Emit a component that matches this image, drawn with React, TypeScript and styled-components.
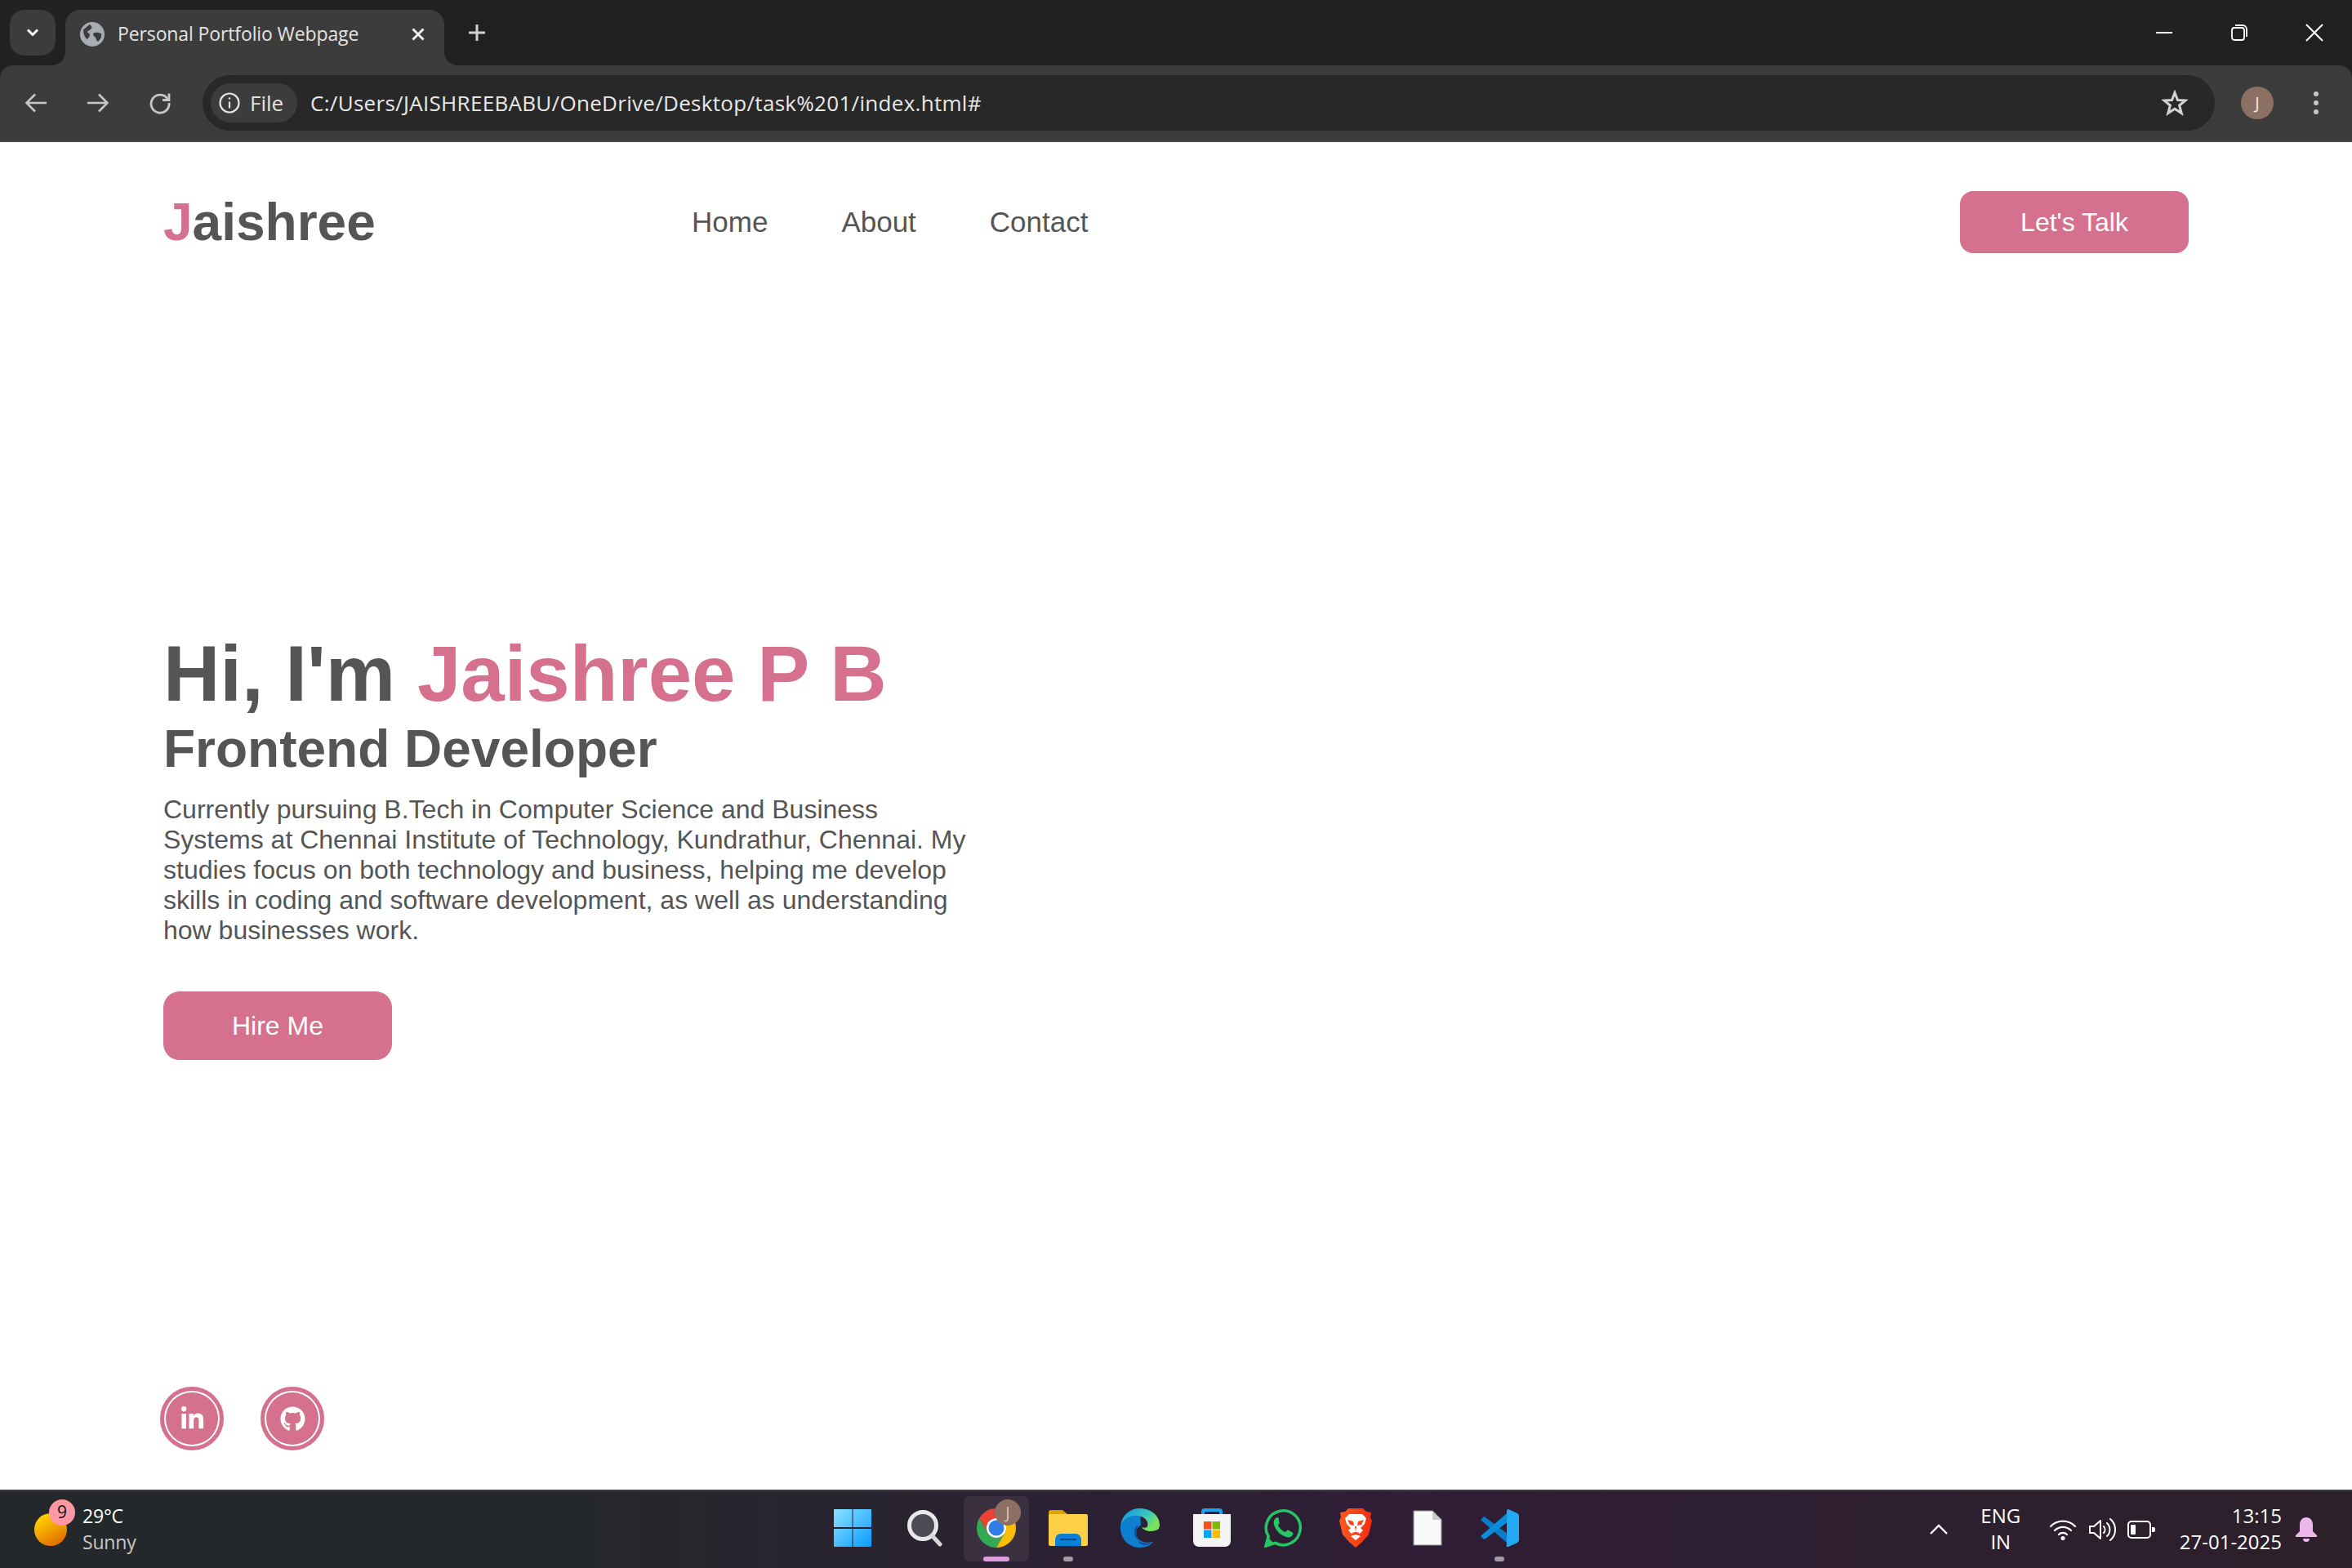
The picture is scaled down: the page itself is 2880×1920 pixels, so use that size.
import React from "react";
import styled, { createGlobalStyle } from "styled-components";
import { FaLinkedinIn, FaGithub } from "react-icons/fa";

const pink = "#d6708f";
const ui = '"Open Sans", "Noto Sans", sans-serif';

const Global = createGlobalStyle`
  html, body { margin: 0; padding: 0; background: #fff; }
  * { box-sizing: border-box; }
  #root { width: 2880px; height: 1920px; overflow: hidden; }
`;

const Screen = styled.div`
  width: 2880px; height: 1920px; display: flex; flex-direction: column;
  font-family: "Liberation Sans", Arial, sans-serif; overflow: hidden;
`;

/* ---------- browser chrome ---------- */
const TabStrip = styled.div`
  height: 80px; flex: none; background: #202221; display: flex; align-items: flex-end;
  padding-left: 12px; position: relative; color: #fff;
`;
const TabMenu = styled.div`
  width: 56px; height: 56px; margin-bottom: 12px; border-radius: 18px; background: #3c3c3c;
  display: flex; align-items: center; justify-content: center;
`;
const Tab = styled.div`
  width: 464px; height: 68px; margin-left: 12px; background: #3c3c3c; border-radius: 18px 18px 0 0;
  display: flex; align-items: center; padding: 0 0 8px 18px; position: relative;
  &::before, &::after {
    content: ""; position: absolute; bottom: 0; width: 16px; height: 16px;
    background: radial-gradient(circle at var(--cx) 0, #202221 15.5px, #3c3c3c 16px);
  }
  &::before { left: -16px; --cx: 0; }
  &::after { right: -16px; --cx: 16px; }
`;
const TabTitle = styled.span`
  font: 400 23px/30px ${ui}; color: #e3e3e3; margin: 0 0 2px 16px; flex: 1; white-space: nowrap;
  letter-spacing: -0.12px;
`;
const TabClose = styled.div`
  width: 20px; height: 20px; margin-right: 22px; display: flex;
`;
const NewTab = styled.div`
  margin: 0 0 28px 28px; width: 24px; height: 24px; display: flex;
`;
const WindowControls = styled.div`
  margin-left: auto; height: 80px; display: flex; align-items: flex-start; padding-top: 28px;
`;
const WinBtn = styled.div`
  width: 92px; height: 24px; display: flex; align-items: center; justify-content: center;
`;

const Toolbar = styled.div`
  height: 94px; flex: none; background: #3c3c3c; border-bottom: 2px solid #484848;
  display: flex; align-items: flex-start; padding-top: 12px; color: #c7c7c7;
  border-radius: 16px 16px 0 0; position: relative;
`;
const ToolbarFill = styled.div`
  background: #202221;
`;
const NavIcon = styled.div`
  width: 76px; height: 68px; display: flex; align-items: center; justify-content: center;
`;
const NavGroup = styled.div`
  width: 248px; padding-left: 6px; display: flex; flex: none;
`;
const Omnibox = styled.div`
  width: 2464px; height: 68px; flex: none; border-radius: 34px; background: #282828;
  display: flex; align-items: center; padding: 0 33px 0 10px;
`;
const SiteChip = styled.div`
  width: 106px; height: 48px; border-radius: 24px; background: #3c3c3c;
  display: flex; align-items: center; padding-left: 9px; gap: 11px;
  font: 400 26px/30px ${ui}; color: #e3e3e3;
`;
const Url = styled.span`
  font: 400 26px/30px ${ui}; color: #e8e8e8; margin-left: 16px; flex: 1; white-space: nowrap;
  letter-spacing: 0.3px;
`;
const Avatar = styled.div`
  width: 40px; height: 40px; border-radius: 50%; background: #8d7064; color: #f3ece8;
  display: flex; align-items: center; justify-content: center; font: 400 20px/1 ${ui};
`;
const ToolbarEnd = styled.div`
  display: flex; align-items: center; height: 68px; padding-left: 32px;
`;
const MenuDots = styled.div`
  margin-left: 49px; width: 8px; display: flex; flex-direction: column; gap: 5px;
  & > i { width: 6px; height: 6px; border-radius: 50%; background: #c7c7c7; display: block; }
`;

/* ---------- page ---------- */
const Page = styled.main`
  flex: 1; min-height: 0; background: #fff; padding: 60px 200px 0; color: #555;
`;
const Header = styled.header`
  height: 76px; display: flex; align-items: center;
`;
const Logo = styled.div`
  width: 647px; font-size: 64px; font-weight: 700; line-height: 76px; color: #555;
`;
const Accent = styled.span`
  color: ${pink};
`;
const NavLinks = styled.nav`
  display: flex; gap: 90px; flex: 1;
`;
const NavLink = styled.a`
  font-size: 35px; line-height: 40px; color: #555; text-decoration: none;
`;
const PinkButton = styled.button<{ $h: number; $r: number }>`
  width: 280px; height: ${(p) => p.$h}px; border: 0; border-radius: ${(p) => p.$r}px;
  background: ${pink}; color: #fff; font: 400 32px/1 "Liberation Sans", Arial, sans-serif; padding: 0;
`;
const Hero = styled.section`
  margin-top: 465px;
`;
const H1 = styled.h1`
  margin: 0; font-size: 96px; line-height: 100px; font-weight: 700; color: #555;
`;
const H2 = styled.h2`
  margin: 7px 0 21px; font-size: 64px; line-height: 70px; font-weight: 700; color: #555;
`;
const Para = styled.p`
  margin: 0 0 56px; width: 1000px; font-size: 32px; line-height: 37px; color: #555;
`;
const Socials = styled.div`
  margin: 400px 0 0 -4px; display: flex; gap: 45px;
`;
const Social = styled.a`
  width: 78px; height: 78px; border-radius: 50%; background: ${pink}; color: #fff;
  display: flex; align-items: center; justify-content: center; font-size: 31px;
  box-shadow: inset 0 0 0 5px ${pink}, inset 0 0 0 7px #fff;
`;

/* ---------- taskbar ---------- */
const Taskbar = styled.footer`
  height: 96px; flex: none; border-top: 2px solid #3e3c40; color: #fff;
  background: linear-gradient(90deg, #25282b 0%, #25282b 25%, #2a2232 42%, #301d36 60%, #2e1f30 80%, #2c2029 100%);
  display: grid; grid-template-columns: 1fr 880px 1fr; font-family: ${ui};
`;
const Weather = styled.div`
  display: flex; align-items: center; padding-left: 42px; position: relative;
`;
const Sun = styled.div`
  width: 40px; height: 40px; border-radius: 50%;
  background: linear-gradient(150deg, #ffd400 10%, #f09a00 55%, #d95a00 100%);
`;
const Badge = styled.div`
  position: absolute; left: 60px; top: 10px; width: 32px; height: 32px; border-radius: 50%;
  background: #ff98a4; color: #111; font: 400 21px/30px ${ui}; text-align: center;
`;
const WeatherText = styled.div`
  margin: 0 0 3px 19px; font-size: 23px; line-height: 32px; letter-spacing: -0.2px;
`;
const Dim = styled.div`
  color: #c9c9c9;
`;
const Dock = styled.div`
  display: flex; align-items: stretch;
`;
const DockCell = styled.div<{ $active?: boolean }>`
  width: 88px; position: relative; display: flex; align-items: center; justify-content: center;
  padding-bottom: 4px;
  ${(p) => p.$active && `&::before { content: ""; position: absolute; left: 4px; top: 6px; width: 80px; height: 80px; border-radius: 8px; background: #3a3040; }`}
  & > svg { position: relative; }
`;
const Indicator = styled.div<{ $active?: boolean }>`
  position: absolute; bottom: 8px; left: 50%; transform: translateX(-50%);
  width: ${(p) => (p.$active ? 32 : 12)}px; height: 6px; border-radius: 3px;
  background: ${(p) => (p.$active ? "#e09ae0" : "#a39aa6")};
`;
const DockBadge = styled.div`
  position: absolute; left: 42px; top: 10px; width: 32px; height: 32px; border-radius: 50%;
  background: #8d7064; color: #d5c5be; font: 400 20px/32px ${ui}; text-align: center;
`;
const Tray = styled.div`
  display: flex; align-items: center; justify-content: flex-end; padding-right: 42px;
`;
const TrayText = styled.div<{ $align: string }>`
  font-size: 24px; line-height: 32px; text-align: ${(p) => p.$align}; white-space: nowrap; margin-bottom: 3px;
`;
const Chevron = styled.div`
  width: 24px; display: flex; margin-right: 34px;
`;
const Lang = styled(TrayText)`
  width: 60px; margin-right: 29px;
`;
const TrayIcons = styled.div`
  display: flex; align-items: center; gap: 14px; margin-right: 30px;
`;
const Bell = styled.div`
  width: 28px; margin-left: 16px; display: flex;
`;

/* ---------- drawings ---------- */
const stroke = { fill: "none", stroke: "currentColor", strokeLinecap: "round", strokeLinejoin: "round" } as const;

const Arrow = ({ back }: { back?: boolean }) => (
  <svg width="32" height="32" viewBox="0 0 32 32" {...stroke} strokeWidth="2.6" strokeLinecap="butt" strokeLinejoin="miter">
    {back ? <path d="M29 16H5M15 5.5 4.5 16 15 26.5" /> : <path d="M3 16h24M17 5.5 27.5 16 17 26.5" />}
  </svg>
);
const Reload = () => (
  <svg width="28" height="28" viewBox="0 0 28 28" {...stroke} strokeWidth="2.8" strokeLinecap="butt" strokeLinejoin="miter">
    <path d="M23.5 9.5A11 11 0 1 0 25 14" />
    <path d="M25 2.5V10.5H17" />
  </svg>
);
const Globe = () => (
  <svg width="30" height="30" viewBox="0 0 30 30">
    <circle cx="15" cy="15" r="15" fill="#a9adb3" />
    <path d="M4 9c3-1 4-4 8-6 2 2 3 3 2 5-2 1-3 3-5 3-1 2 3 2 3 5 0 2-2 3-3 5-3-2-5-6-5-12zM16 14c3-2 6-1 10 0 1 4-1 7-4 10-2-1-2-3-3-5-2-1-3-3-3-5z" fill="#3c3c3c" />
  </svg>
);
const Info = () => (
  <svg width="28" height="28" viewBox="0 0 28 28" fill="none" stroke="#e3e3e3" strokeWidth="2.2">
    <circle cx="14" cy="14" r="11.5" />
    <path d="M14 12.5V20.5" />
    <circle cx="14" cy="8.5" r="1.3" fill="#e3e3e3" stroke="none" />
  </svg>
);
const Star = () => (
  <svg width="32" height="32" viewBox="0 0 32 32" fill="none" stroke="#d4d4d4" strokeWidth="3" strokeLinejoin="miter">
    <path d="M16 3.5 19.5 12.5 29 13 21.6 19 24.2 28.5 16 23.2 7.8 28.5 10.4 19 3 13 12.5 12.5Z" />
  </svg>
);
const ChromeIcon = () => (
  <svg width="48" height="48" viewBox="0 0 48 48">
    <path fill="#EA4335" d="M24 0a24 24 0 0 0-20.78 12l10.39 18A12 12 0 0 1 24 12h20.78A24 24 0 0 0 24 0z" />
    <path fill="#34A853" d="M3.22 12A24 24 0 0 0 24 48l10.39-18a12 12 0 0 1-20.78 0z" />
    <path fill="#FBBC04" d="M44.78 12H24a12 12 0 0 1 10.39 18L24 48a24 24 0 0 0 20.78-36z" />
    <circle cx="24" cy="24" r="12" fill="#fff" />
    <circle cx="24" cy="24" r="9.5" fill="#2f7de8" />
  </svg>
);
const StartIcon = () => (
  <svg width="46" height="46" viewBox="0 0 46 46">
    <defs>
      <linearGradient id="st" x1="0" y1="0" x2="1" y2="1">
        <stop offset="0" stopColor="#8be1ff" />
        <stop offset="1" stopColor="#0a9bff" />
      </linearGradient>
    </defs>
    <path fill="url(#st)" d="M1 0h21.5v22H0V1a1 1 0 0 1 1-1zM23.5 0H45a1 1 0 0 1 1 1v21H23.5zM0 24h22.5v22H1a1 1 0 0 1-1-1zM23.5 24H46v21a1 1 0 0 1-1 1H23.5z" />
  </svg>
);
const SearchIcon = () => (
  <svg width="44" height="46" viewBox="0 0 44 46">
    <circle cx="20" cy="20" r="16.5" fill="#4d4a55" stroke="#e8e8e8" strokeWidth="5" />
    <path d="M31 32 41 43" stroke="#d8d8d8" strokeWidth="5" strokeLinecap="round" />
  </svg>
);
const FolderIcon = () => (
  <svg width="48" height="44" viewBox="0 0 48 44">
    <path fill="#dfa300" d="M0 3a3 3 0 0 1 3-3h14l6 5h22v8H0z" />
    <rect y="5" width="48" height="39" rx="2" fill="#ffcf48" />
    <path fill="#0a7fd6" d="M8 44V36a7 7 0 0 1 7-7h18a7 7 0 0 1 7 7v8z" />
    <rect x="14" y="35" width="20" height="2" fill="#064d8f" />
  </svg>
);
const EdgeIcon = () => (
  <svg width="48" height="48" viewBox="0 0 48 48">
    <defs>
      <linearGradient id="eg" x1="0.2" y1="0.1" x2="0.95" y2="0.55">
        <stop offset="0" stopColor="#1aa3d8" />
        <stop offset="0.55" stopColor="#38c6c0" />
        <stop offset="1" stopColor="#7be25e" />
      </linearGradient>
    </defs>
    <path fill="#0f7fd0" d="M24 0C10 0 0 11 0 24c0 13 10 24 24 24 7 0 13-3 16-7-8 2-21 1-21-12 0-4 3-7 6-8z" />
    <path fill="#0b4f9c" d="M20 26c0-6 5-9 10-8-8 0-13 4-13 11 0 10 10 16 21 13-2 2-8 4-13 2-4-2-5-10-5-18z" />
    <path fill="url(#eg)" d="M24 0C11 0 2 9 1 20c3-8 12-12 20-11 9 1 14 7 12 13-1 2-4 2-7 1 3 5 11 6 17 4 4-1 5-4 5-7C48 9 37 0 24 0z" />
  </svg>
);
const StoreIcon = () => (
  <svg width="46" height="48" viewBox="0 0 46 48">
    <path d="M12 8V4a2 2 0 0 1 2-2h18a2 2 0 0 1 2 2v4" fill="none" stroke="#19a3f0" strokeWidth="4" />
    <path d="M0 7h46v33a7 7 0 0 1-7 7H7a7 7 0 0 1-7-7z" fill="#f4f4f4" />
    <rect x="13" y="16" width="9.5" height="9.5" fill="#f25022" />
    <rect x="23.5" y="16" width="9.5" height="9.5" fill="#7fba00" />
    <rect x="13" y="26.5" width="9.5" height="9.5" fill="#00a4ef" />
    <rect x="23.5" y="26.5" width="9.5" height="9.5" fill="#ffb900" />
  </svg>
);
const WhatsAppIcon = () => (
  <svg width="48" height="48" viewBox="0 0 48 48">
    <path d="M2 46l3.2-11.5A21 21 0 1 1 13.5 42.4z" fill="none" stroke="#25c764" strokeWidth="3.5" strokeLinejoin="miter" />
    <path fill="#25c764" d="M18 12c-1-1-3-1-4 0-2 2-3 4-2 8 2 7 8 13 15 15 4 1 7 0 8-3 1-1 0-3-1-3l-4-2c-1-1-2 0-3 1l-1 1c-4-1-7-5-9-8l1-2c1-1 1-2 0-3z" />
    <path d="M0 48l4-13 9 9z" fill="#25c764" />
  </svg>
);
const BraveIcon = () => (
  <svg width="40" height="48" viewBox="0 0 40 48">
    <defs>
      <linearGradient id="br" x1="0" y1="0" x2="1" y2="0">
        <stop offset="0" stopColor="#ff5a1f" />
        <stop offset="1" stopColor="#f22c10" />
      </linearGradient>
    </defs>
    <path fill="url(#br)" d="M11 0h18l4 4 6 1-1 6 2 4-4 17-8 9-8 7-8-7-8-9L0 15l2-4-1-6 6-1z" />
    <path fill="#fff" d="M12 7h16l5 5-2 7-5 5 3 3-4 4-5-2-5 2-4-4 3-3-5-5-2-7zM14 34l6-2 6 2-6 5z" />
    <path fill="#f4421a" d="M10 14l7 2 1 5-5-1zM30 14l-7 2-1 5 5-1zM19 22h2l-1 7 5 1-5 2-5-2 5-1z" />
  </svg>
);
const FileIcon = () => (
  <svg width="36" height="44" viewBox="0 0 36 44">
    <path d="M1 1h23l11 11v31H1z" fill="#fafafa" stroke="#8a8a8a" strokeWidth="1.2" />
    <path d="M24 1v11h11z" fill="#c9c9c9" />
  </svg>
);
const VSCodeIcon = () => (
  <svg width="48" height="48" viewBox="0 0 48 48">
    <path fill="#0a7ccb" d="M1 14l3-3c1-1 2-1 3 0l28 21v8l-2 2z" />
    <path fill="#0a8ddb" d="M1 34l3 3c1 1 2 1 3 0L35 16V8l-2-2z" />
    <path fill="#23a8f2" d="M35 1l11 5c1 1 2 2 2 3v30c0 1-1 2-2 3l-11 5c-1 0-2 0-3-1l1-1V2z" />
  </svg>
);
const Wifi = () => (
  <svg width="34" height="28" viewBox="0 0 34 28" {...stroke} strokeWidth="2.2">
    <path d="M2 10a21 21 0 0 1 30 0M7 15a14 14 0 0 1 20 0M12 20a7 7 0 0 1 10 0" />
    <circle cx="17" cy="24.5" r="2.5" fill="currentColor" stroke="none" />
  </svg>
);
const Speaker = () => (
  <svg width="34" height="30" viewBox="0 0 34 30" {...stroke} strokeWidth="2">
    <path d="M2 11h5l8-7v22l-8-7H2z" />
    <path d="M19 11a6 6 0 0 1 0 8M23 7a11 11 0 0 1 0 16M27 2a17 17 0 0 1 0 26" />
  </svg>
);
const Battery = () => (
  <svg width="34" height="22" viewBox="0 0 34 22">
    <rect x="1" y="1" width="27" height="20" rx="4" fill="none" stroke="#fff" strokeWidth="2" />
    <rect x="4" y="5" width="6" height="12" rx="1" fill="#fff" />
    <path d="M30 8h2a2 2 0 0 1 2 2v2a2 2 0 0 1-2 2h-2z" fill="#fff" />
  </svg>
);
const BellIcon = () => (
  <svg width="28" height="32" viewBox="0 0 28 32" fill="#ecb8ec">
    <path d="M14 1c5 0 8 4 8 9v8l5 5c1 1 0 2-1 2H2c-1 0-2-1-1-2l5-5v-8c0-5 3-9 8-9z" />
    <path d="M10 27h8a4 4 0 0 1-8 0z" />
  </svg>
);

export default function App() {
  return (
    <Screen>
      <Global />
      <TabStrip>
        <TabMenu>
          <svg width="16" height="12" viewBox="0 0 16 12" fill="none" stroke="#fff" strokeWidth="3">
            <path d="M2 2.5 8 8.5 14 2.5" />
          </svg>
        </TabMenu>
        <Tab>
          <Globe />
          <TabTitle>Personal Portfolio Webpage</TabTitle>
          <TabClose>
            <svg width="20" height="20" viewBox="0 0 20 20" stroke="#f0f0f0" strokeWidth="3">
              <path d="M3.5 3.5 16.5 16.5M16.5 3.5 3.5 16.5" />
            </svg>
          </TabClose>
        </Tab>
        <NewTab>
          <svg width="24" height="24" viewBox="0 0 24 24" stroke="#d0d0d0" strokeWidth="3">
            <path d="M12 2V22M2 12H22" />
          </svg>
        </NewTab>
        <WindowControls>
          <WinBtn>
            <svg width="20" height="4" viewBox="0 0 20 4" stroke="#fff" strokeWidth="2"><path d="M0 2H20" /></svg>
          </WinBtn>
          <WinBtn>
            <svg width="20" height="20" viewBox="0 0 20 20" fill="none" stroke="#fff" strokeWidth="1.8">
              <rect x="1" y="4" width="15" height="15" rx="3" />
              <path d="M5 1h9a5 5 0 0 1 5 5v9" />
            </svg>
          </WinBtn>
          <WinBtn>
            <svg width="22" height="22" viewBox="0 0 22 22" stroke="#fff" strokeWidth="2"><path d="M1 1 21 21M21 1 1 21" /></svg>
          </WinBtn>
        </WindowControls>
      </TabStrip>
      <ToolbarFill>
        <Toolbar>
          <NavGroup>
            <NavIcon><Arrow back /></NavIcon>
            <NavIcon><Arrow /></NavIcon>
            <NavIcon><Reload /></NavIcon>
          </NavGroup>
          <Omnibox>
            <SiteChip><Info />File</SiteChip>
            <Url>C:/Users/JAISHREEBABU/OneDrive/Desktop/task%201/index.html#</Url>
            <Star />
          </Omnibox>
          <ToolbarEnd>
            <Avatar>J</Avatar>
            <MenuDots><i /><i /><i /></MenuDots>
          </ToolbarEnd>
        </Toolbar>
      </ToolbarFill>
      <Page>
        <Header>
          <Logo><Accent>J</Accent>aishree</Logo>
          <NavLinks>
            <NavLink href="#">Home</NavLink>
            <NavLink href="#">About</NavLink>
            <NavLink href="#">Contact</NavLink>
          </NavLinks>
          <PinkButton $h={76} $r={16}>Let's Talk</PinkButton>
        </Header>
        <Hero>
          <H1>Hi, I'm <Accent>Jaishree P B</Accent></H1>
          <H2>Frontend Developer</H2>
          <Para>
            Currently pursuing B.Tech in Computer Science and Business Systems at Chennai Institute of Technology,
            Kundrathur, Chennai. My studies focus on both technology and business, helping me develop skills in coding
            and software development, as well as understanding how businesses work.
          </Para>
          <PinkButton $h={84} $r={20}>Hire Me</PinkButton>
        </Hero>
        <Socials>
          <Social href="#" aria-label="LinkedIn"><FaLinkedinIn /></Social>
          <Social href="#" aria-label="GitHub"><FaGithub /></Social>
        </Socials>
      </Page>
      <Taskbar>
        <Weather>
          <Sun />
          <Badge>9</Badge>
          <WeatherText>
            <div>29°C</div>
            <Dim>Sunny</Dim>
          </WeatherText>
        </Weather>
        <Dock>
          <DockCell><StartIcon /></DockCell>
          <DockCell><SearchIcon /></DockCell>
          <DockCell $active>
            <ChromeIcon />
            <DockBadge>J</DockBadge>
            <Indicator $active />
          </DockCell>
          <DockCell><FolderIcon /><Indicator /></DockCell>
          <DockCell><EdgeIcon /></DockCell>
          <DockCell><StoreIcon /></DockCell>
          <DockCell><WhatsAppIcon /></DockCell>
          <DockCell><BraveIcon /></DockCell>
          <DockCell><FileIcon /></DockCell>
          <DockCell><VSCodeIcon /><Indicator /></DockCell>
        </Dock>
        <Tray>
          <Chevron>
            <svg width="24" height="14" viewBox="0 0 24 14" fill="none" stroke="#fff" strokeWidth="2.4">
              <path d="M2 12 12 2 22 12" />
            </svg>
          </Chevron>
          <Lang $align="center"><div>ENG</div><div>IN</div></Lang>
          <TrayIcons>
            <Wifi />
            <Speaker />
            <Battery />
          </TrayIcons>
          <TrayText $align="right"><div>13:15</div><div>27-01-2025</div></TrayText>
          <Bell><BellIcon /></Bell>
        </Tray>
      </Taskbar>
    </Screen>
  );
}
